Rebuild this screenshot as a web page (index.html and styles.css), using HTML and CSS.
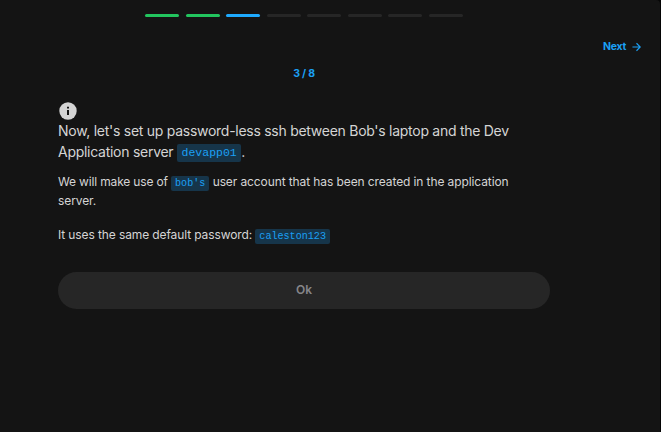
FILE: index.html
```html
<!DOCTYPE html>
<html lang="en">
<head>
<meta charset="utf-8">
<title>Question 3 / 8</title>
<link rel="stylesheet" href="styles.css">
</head>
<body>
<main class="panel">
  <div class="progress">
    <span class="step done"></span><span class="step done"></span><span class="step current"></span><span class="step"></span><span class="step"></span><span class="step"></span><span class="step"></span><span class="step"></span>
  </div>
  <div class="nav">
    <a class="next">Next
      <svg class="arrow" viewBox="0 0 10 10" fill="none" stroke="currentColor"><path d="M.5 5H9M5 .8 9.2 5 5 9.2" stroke-width="1.3"/></svg>
    </a>
  </div>
  <section class="content">
    <div class="count">3 / 8</div>
    <svg class="info" viewBox="0 0 18 18"><circle cx="9" cy="9" r="8.7" fill="#d4d4d4"/><path d="M8 4.8h2v1.8H8zM8 8h2v5H8z" fill="#141414"/></svg>
    <h1 class="title">Now, let's set up password-less ssh between Bob's laptop and the Dev Application server <code>devapp01</code>.</h1>
    <p class="text"><span class="lead">We will make use of </span><code>bob's</code> user account that has been created in the application server.</p>
    <p class="text">It uses the same default password: <code>caleston123</code></p>
    <button class="ok">Ok</button>
  </section>
</main>
</body>
</html>
```
FILE: styles.css
```css
* { box-sizing: border-box; }
body { margin: 0; background: #050505; font-family: Inter, "Liberation Sans", sans-serif; color: #d4d4d4; }
.panel { width: 660px; height: 432px; background: #141414; border-top-right-radius: 4px; overflow: hidden; }
.progress { display: flex; justify-content: space-between; width: 318px; margin: 14px 0 0 145px; }
.step { width: 34px; height: 3px; border-radius: 2px; background: #262626; }
.done { background: #22c55e; }
.current { background: #1eaaff; }
.nav { display: flex; justify-content: flex-end; margin-top: 22px; padding-right: 19px; }
.next { display: flex; align-items: center; gap: 6px; height: 16px; font-size: 10.5px; font-weight: 700; line-height: 16px; letter-spacing: -0.3px; color: #1ba0f5; }
.arrow { width: 9px; height: 10px; }
.content { width: 492px; margin-left: 58px; }
.count { margin-top: 11px; height: 16px; font-size: 10.5px; font-weight: 700; line-height: 16px; letter-spacing: -0.2px; text-align: center; color: #1ba0f5; }
.info { display: block; width: 18px; height: 18px; margin: 20px 0 0 1px; }
.title { width: 470px; margin: 0; font-size: 14px; font-weight: 400; line-height: 21px; letter-spacing: -0.27px; }
code { padding: 2px 4px; border-radius: 2px; background: #16354a; color: #1ba0f5; font-family: "Liberation Mono", monospace; font-size: 10.1px; line-height: 1; letter-spacing: 0; }
.title code { padding: 2px 4.5px 3px; font-size: 11.5px; vertical-align: 1px; }
.text { width: 470px; margin: 10px 0 0; font-size: 12px; line-height: 19px; letter-spacing: -0.1px; }
.text + .text { margin-top: 15px; letter-spacing: -0.11px; }
.lead { letter-spacing: -0.16px; }
.ok { display: block; width: 492px; height: 37px; margin: 28px 0 0; padding: 0 0 2px; border: 0; border-radius: 19px; background: #262626; color: #858589; font: 600 12px Inter, sans-serif; }
```
